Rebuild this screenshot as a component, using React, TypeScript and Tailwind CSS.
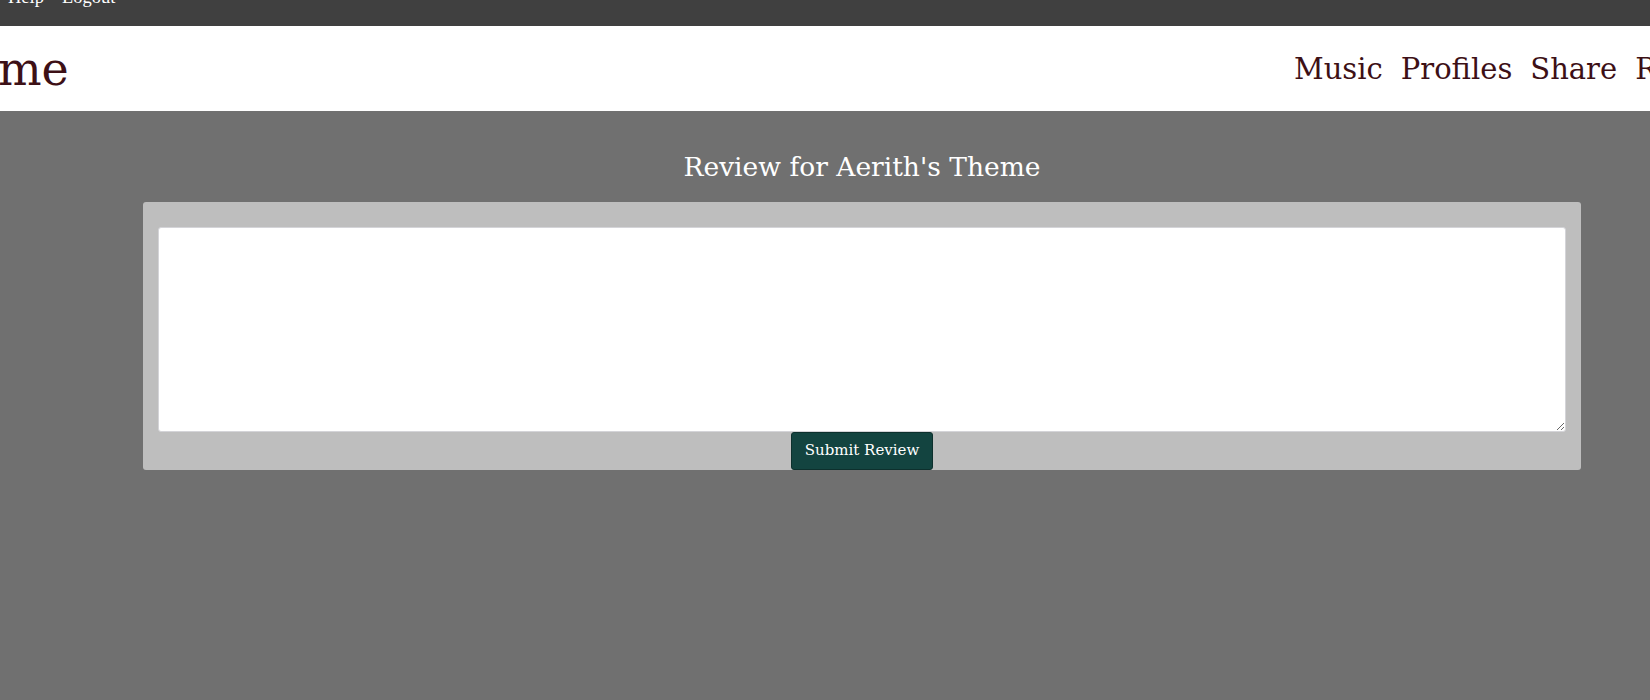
export default function App() {
  return (
    <div className="min-h-[700px] bg-[#707070] [font-family:'DejaVu_Serif',serif]">
      <div className="h-[26px] bg-[#404040] overflow-hidden">
        <div className="flex gap-[18px] pl-[8px] -mt-[13px] text-white text-[18.5px] leading-[20px] [font-family:'Liberation_Serif',serif]">
          <span>Help</span>
          <span>Logout</span>
        </div>
      </div>
      <div className="h-[85px] bg-white flex items-center overflow-hidden text-[#3d1016] whitespace-nowrap">
        <div className="w-[1294px] shrink-0">
          <div className="text-[46px] leading-none -ml-[2px] mt-[0px]">me</div>
        </div>
        <div className="flex gap-[18px] text-[29px] leading-none shrink-0 mt-[2px]">
          <span>Music</span>
          <span>Profiles</span>
          <span>Share</span>
          <span>Reviews</span>
        </div>
      </div>
      <div className="pl-[143px] w-[1581px]">
        <h1 className="text-center text-white text-[26.5px] leading-none pt-[43px] pb-[21px]">Review for Aerith's Theme</h1>
        <div className="bg-[#bebebe] rounded-[3px] pt-[25px] px-[15px] flex flex-col items-center">
          <textarea className="w-full h-[205px] bg-white rounded-[3px] border border-[#d4d4d8] block resize-y outline-none" />
          <button className="bg-[#134440] text-white text-[15px] rounded-[3px] w-[142px] h-[38px] border border-[#0d302d]">
            Submit Review
          </button>
        </div>
      </div>
    </div>
  );
}
